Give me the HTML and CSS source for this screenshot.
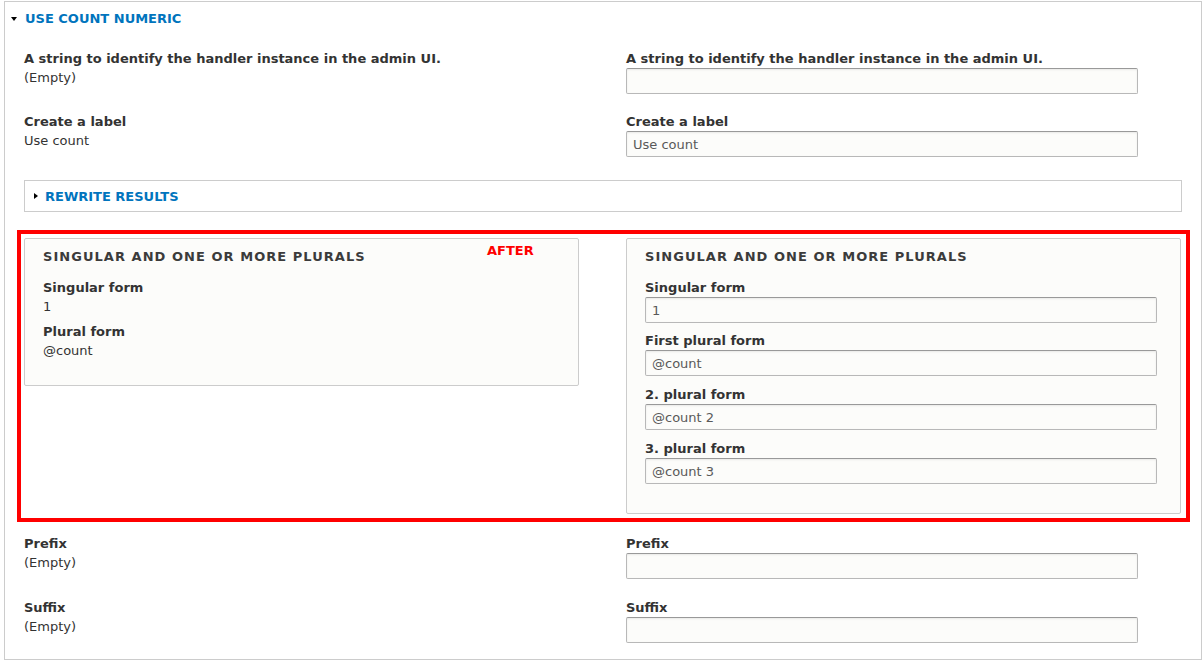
FILE: index.html
```html
<!DOCTYPE html>
<html lang="en">
<head>
    <meta charset="UTF-8">
    <title>Use count numeric</title>
    <link rel="stylesheet" href="styles.css">
</head>
<body>
    <div class="details">
        <div class="summary"><span class="arrow-down"></span>Use count numeric</div>

        <div class="details-body">
            <div class="row">
                <div class="form-item">
                    <div class="label">A string to identify the handler instance in the admin UI.</div>
                    <div class="value">(Empty)</div>
                </div>
                <div class="form-item">
                    <div class="label">A string to identify the handler instance in the admin UI.</div>
                    <input type="text" class="text" value="">
                </div>
            </div>

            <div class="row">
                <div class="form-item">
                    <div class="label">Create a label</div>
                    <div class="value">Use count</div>
                </div>
                <div class="form-item">
                    <div class="label">Create a label</div>
                    <input type="text" class="text" value="Use count">
                </div>
            </div>

            <div class="collapsed">
                <span class="arrow-right"></span>Rewrite results
            </div>

            <div class="highlight">
                <div class="fieldset before">
                    <div class="legend">Singular and one or more plurals</div>
                    <div class="plain-item">
                        <div class="label">Singular form</div>
                        <div class="value">1</div>
                    </div>
                    <div class="plain-item">
                        <div class="label">Plural form</div>
                        <div class="value">@count</div>
                    </div>
                    <span class="note">AFTER</span>
                </div>

                <div class="fieldset">
                    <div class="legend">Singular and one or more plurals</div>
                    <div class="input-item">
                        <div class="label">Singular form</div>
                        <input type="text" class="text" value="1">
                    </div>
                    <div class="input-item">
                        <div class="label">First plural form</div>
                        <input type="text" class="text" value="@count">
                    </div>
                    <div class="input-item">
                        <div class="label">2. plural form</div>
                        <input type="text" class="text" value="@count 2">
                    </div>
                    <div class="input-item">
                        <div class="label">3. plural form</div>
                        <input type="text" class="text" value="@count 3">
                    </div>
                </div>
            </div>

            <div class="row">
                <div class="form-item">
                    <div class="label">Prefix</div>
                    <div class="value">(Empty)</div>
                </div>
                <div class="form-item">
                    <div class="label">Prefix</div>
                    <input type="text" class="text" value="">
                </div>
            </div>

            <div class="row last">
                <div class="form-item">
                    <div class="label">Suffix</div>
                    <div class="value">(Empty)</div>
                </div>
                <div class="form-item">
                    <div class="label">Suffix</div>
                    <input type="text" class="text" value="">
                </div>
            </div>
        </div>
    </div>
</body>
</html>
```

FILE: styles.css
```css
body {
    margin: 0;
    background: #fff;
    font-family: "DejaVu Sans", Verdana, sans-serif;
    font-size: 13px;
    color: #333;
}
.details {
    margin: 1px 0 0 4px;
    width: 1198px;
    border: 1px solid #ccc;
    box-sizing: border-box;
}
.summary {
    display: flex;
    align-items: center;
    padding: 8px 0 0 6px;
    height: 18px;
    line-height: 18px;
    font-weight: bold;
    text-transform: uppercase;
    color: #0074bd;
}
.arrow-down {
    width: 0;
    height: 0;
    border-left: 3px solid transparent;
    border-right: 3px solid transparent;
    border-top: 4px solid #000;
    margin-right: 8px;
}
.arrow-right {
    width: 0;
    height: 0;
    border-top: 3px solid transparent;
    border-bottom: 3px solid transparent;
    border-left: 4px solid #000;
    margin-right: 7px;
}
.details-body {
    padding: 21px 19px 16px 19px;
}
.row {
    display: grid;
    grid-template-columns: 555px 555px;
    column-gap: 47px;
    margin-bottom: 18px;
}
.row.last {
    margin-top: 19px;
    margin-bottom: 0;
}
.label {
    font-weight: bold;
    line-height: 19px;
}
.value {
    line-height: 19px;
}
input.text {
    display: block;
    width: 512px;
    height: 26px;
    box-sizing: border-box;
    margin: 0;
    padding: 0 6px;
    font-family: "DejaVu Sans", Verdana, sans-serif;
    font-size: 13px;
    color: #595959;
    background: #fcfcfa;
    border: 1px solid #b8b8b8;
    border-top-color: #999;
    border-radius: 2px;
    box-shadow: inset 0 1px 2px rgba(0, 0, 0, 0.08);
}
.collapsed {
    display: flex;
    align-items: center;
    margin: 23px 0 18px;
    height: 32px;
    box-sizing: border-box;
    padding-left: 9px;
    border: 1px solid #ccc;
    font-weight: bold;
    text-transform: uppercase;
    color: #0074bd;
}
.highlight {
    display: grid;
    grid-template-columns: 555px 555px;
    column-gap: 47px;
    align-items: start;
    margin: 0 -8px 12px -7px;
    padding: 4px 3px;
    border: 4px solid #f00;
}
.fieldset {
    position: relative;
    background: #fcfcfa;
    border: 1px solid #ccc;
    border-radius: 2px;
    padding: 9px 18px 29px;
}
.fieldset.before {
    padding-bottom: 25px;
}
.legend {
    line-height: 18px;
    margin-bottom: 12px;
    font-weight: bold;
    text-transform: uppercase;
    letter-spacing: 0.08em;
    color: #3b3b3b;
}
.plain-item {
    margin-bottom: 6px;
}
.plain-item:last-of-type {
    margin-bottom: 0;
}
.input-item {
    margin-bottom: 9px;
}
.input-item:nth-child(2) {
    margin-bottom: 8px;
}
.input-item:last-child {
    margin-bottom: 0;
}
.note {
    position: absolute;
    left: 462px;
    top: 4px;
    font-weight: bold;
    color: #f00;
}
```
